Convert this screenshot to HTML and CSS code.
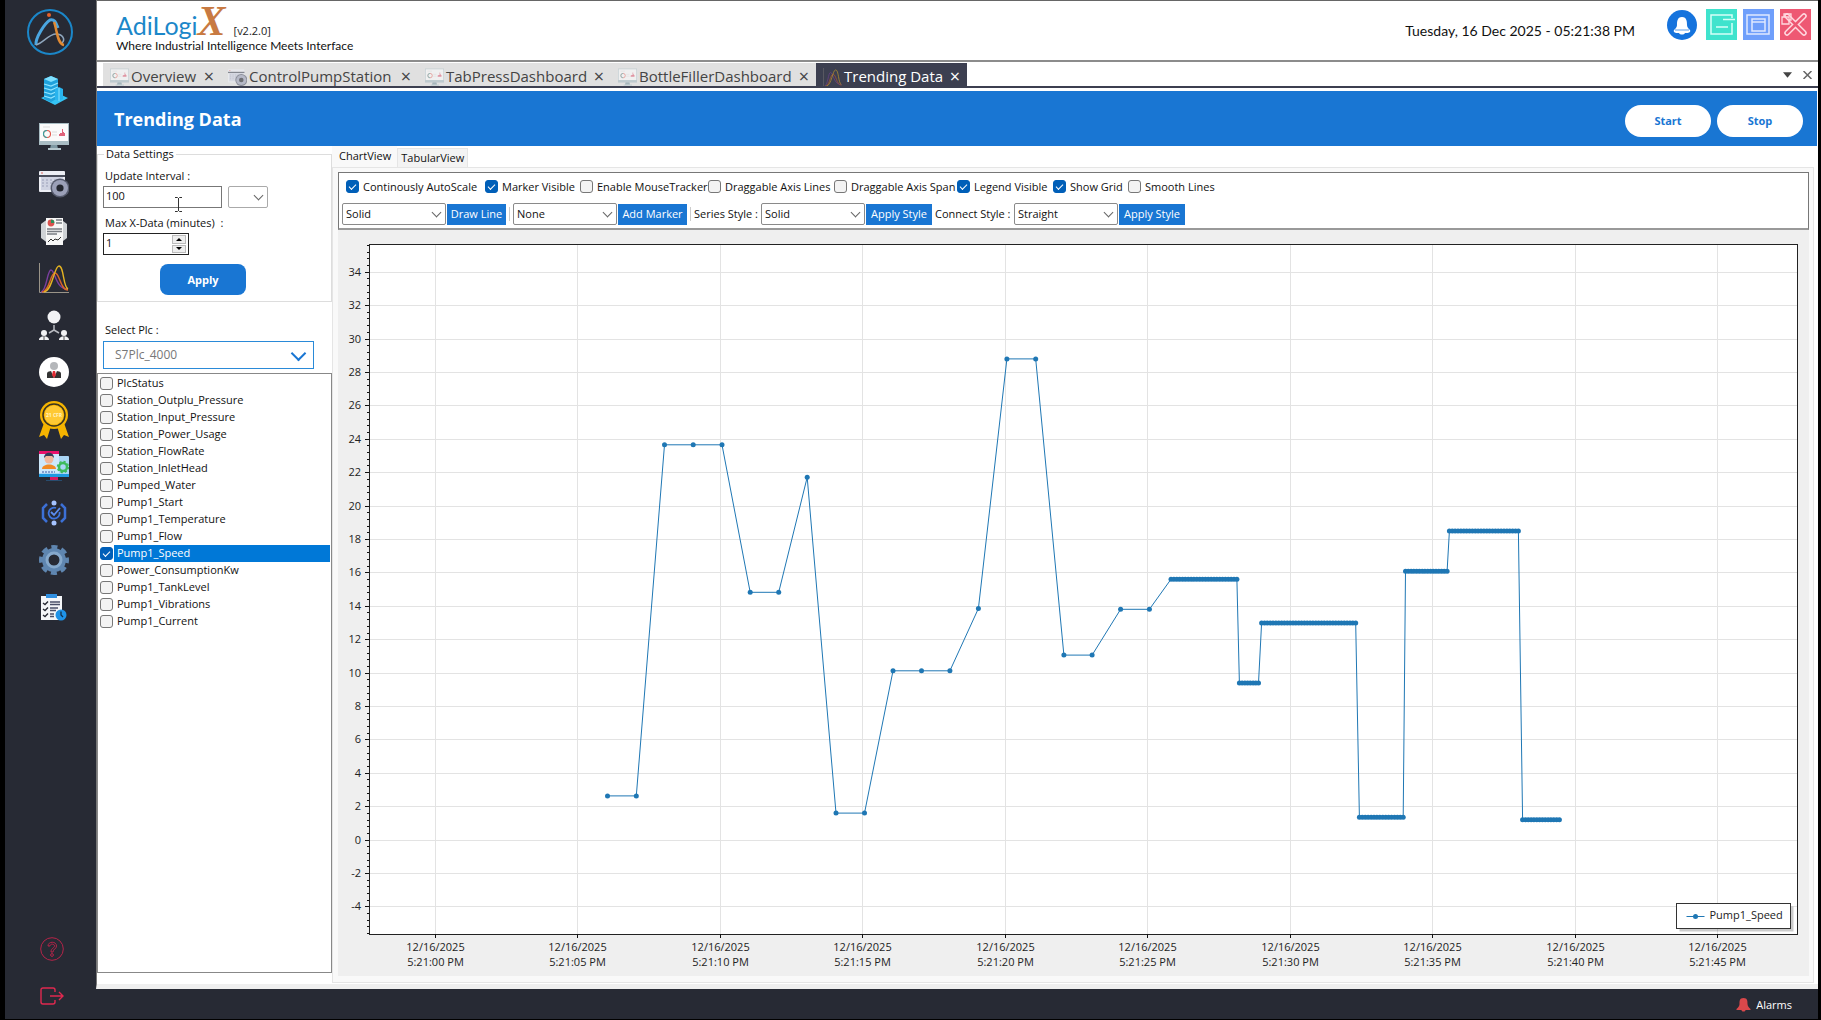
FILE: index.html
```html
<!DOCTYPE html>
<html lang="en">
<head>
    <meta charset="UTF-8">
    <meta name="viewport" content="width=device-width, initial-scale=1.0">
    <title>AdiLogiX - Trending Data</title>
    <link rel="stylesheet" href="styles.css">
</head>
<body>
    <!-- Shared icons -->
    <svg class="defs" width="0" height="0">
        <symbol id="monitor" viewBox="0 0 30 30">
            <path d="M12 22h6l1 5h-8z" fill="#7f99a3"/>
            <rect x="9" y="26" width="13" height="2" fill="#b5c7cd"/>
            <rect x="0" y="1" width="30" height="22" fill="#a9bdc4"/>
            <rect x="1" y="2" width="28" height="17" fill="#fbfbfb"/>
            <circle cx="8" cy="12" r="3.500" fill="none" stroke="#e2574c" stroke-width="1.100"/>
            <path d="M4.500 12a3.500 3.500 0 0 1 3.500-3.500M8 15.500a3.500 3.500 0 0 1-3.500-3.500" fill="none" stroke="#2fa8a8" stroke-width="1.100"/>
            <path d="M13 10h5M13 13h5M4 5h7" stroke="#ddd" stroke-width="1"/>
            <path d="M20 14v-2h1v-1h2V7h1v3h1v1h1v3z" fill="#e0637a"/>
        </symbol>
        <symbol id="window" viewBox="0 0 30 30">
            <rect x="0" y="2" width="26" height="21" rx="1" fill="#eceef4"/>
            <rect x="0" y="6" width="26" height="2" fill="#4a4e5c"/>
            <rect x="2" y="8" width="22" height="13" fill="#cfd3e2"/>
            <path d="M3 11h15M3 14h12M3 17h9" stroke="#9ba0b8" stroke-dasharray="2 2"/>
            <circle cx="3" cy="4" r="0.8" fill="#e2574c"/>
            <circle cx="21" cy="19" r="9.5" fill="#555a6c"/>
            <circle cx="21" cy="19" r="8" fill="#9ba0b8"/>
            <circle cx="21" cy="19" r="3.6" fill="#23262f"/>
        </symbol>
        <symbol id="curves" viewBox="0 0 30 30">
            <path d="M.5 0v29.5H30" fill="none" stroke="#9a9488"/>
            <path d="M2 29C8 28 8 7 12 7s5 20 17 19" fill="none" stroke="#7b3fa0" stroke-width="1.4"/>
            <path d="M3 29c8-1 8-19 13-19s5 17 13 17" fill="none" stroke="#d9622b" stroke-width="1.4"/>
            <path d="M5 29C14 27 15 3 20 3s4 21 9 23" fill="none" stroke="#e6b422" stroke-width="1.4"/>
        </symbol>
    </svg>

    <div class="app">
        <aside class="sidebar">
            <svg class="logo" viewBox="0 0 46 46">
                <circle cx="23" cy="23" r="22" fill="none" stroke="#1b87c9" stroke-width="2"/>
                <path d="M9 36c-1-7 9-22 14-25 5-1 6 3 8 8" fill="none" stroke="#4ba6e0" stroke-width="3"/>
                <path d="M9 36c7-2 13-11 20-11 6 0 10 5 6 9" fill="none" stroke="#8fa6bd" stroke-width="1.5"/>
                <path d="M27 13c3 7 3 22 10 23" fill="none" stroke="#e08a33" stroke-width="2.5"/>
                <circle cx="22" cy="6" r="2" fill="#e8622a"/>
            </svg>
            <nav class="menu">
                <a href="#" aria-label="Plant">
                    <svg viewBox="0 0 30 30">
                        <path d="M2 23l14-6 13 6-13 7z" fill="#35c4f5"/>
                        <path d="M5 4l7-3 7 3v19l-7 4-7-3z" fill="#1fa2dc"/>
                        <path d="M5 4l7-3 7 3-7 3z" fill="#7fe0ff"/>
                        <path d="M5 9l7 2 7-3M5 13l7 2 7-3M5 17l7 2 7-3M5 21l7 2 4-2" fill="none" stroke="#8fe4ff" stroke-width="1.3"/>
                        <path d="M16 14l4-2 4 2v10l-4 2-4-2z" fill="#29b4ee"/>
                        <path d="M20 13v13" stroke="#8fe4ff"/>
                    </svg>
                </a>
                <a href="#" aria-label="Dashboards"><svg><use href="#monitor"/></svg></a>
                <a href="#" aria-label="Control windows"><svg><use href="#window"/></svg></a>
                <a href="#" aria-label="Reports">
                    <svg viewBox="0 0 30 30">
                        <path d="M10 2h10l8 6v14l-8 6H10l-8-6V8z" fill="#cfd2d6"/>
                        <rect x="7" y="2" width="17" height="27" fill="#f7f7f7"/>
                        <circle cx="12" cy="7" r="3.4" fill="#d9534f"/>
                        <path d="M12 7V3.600a3.400 3.400 0 0 1 3.400 3.400z" fill="#2c8f5b"/>
                        <path d="M17 4h6M17 7h6M8 13h15M8 15.500h15M8 18h10" stroke="#7a7d84" stroke-width="1.300"/>
                        <path d="M9 26l3-3 2 2 2-2 3 1 3-3" fill="none" stroke="#333"/>
                    </svg>
                </a>
                <a href="#" aria-label="Trending"><svg><use href="#curves"/></svg></a>
                <a href="#" aria-label="Users">
                    <svg viewBox="0 0 30 30">
                        <circle cx="15" cy="7" r="6.500" fill="#f2f3f5"/>
                        <path d="M15 15v5l-5 3M15 20l5 3" fill="none" stroke="#b8bac0" stroke-width="1.500"/>
                        <circle cx="5" cy="23" r="3" fill="#f2f3f5"/>
                        <circle cx="25" cy="23" r="3" fill="#f2f3f5"/>
                        <path d="M0 30c0-5 10-5 10 0zM20 30c0-5 10-5 10 0z" fill="#f2f3f5"/>
                        <path d="M5 26v4M25 26v4" stroke="#555"/>
                    </svg>
                </a>
                <a href="#" aria-label="Account">
                    <svg viewBox="0 0 30 30">
                        <circle cx="15" cy="15" r="15" fill="#fff"/>
                        <circle cx="15" cy="9" r="4" fill="#b5b7ba"/>
                        <path d="M8 21v-4c0-3 3-3 7-3s7 0 7 3v4z" fill="#333"/>
                        <path d="M12 14h6l-3 7z" fill="#f3f3f3"/>
                        <path d="M14 14h2l1 4-2 3-2-3z" fill="#e02b34"/>
                    </svg>
                </a>
                <a href="#" aria-label="Quality">
                    <svg viewBox="0 0 30 38" class="tall">
                        <path d="M5 22L0 36l5-2 3 4 4-13zM25 22l5 14-5-2-3 4-4-13z" fill="#f5b400"/>
                        <circle cx="15" cy="14" r="14" fill="#f5b400"/>
                        <circle cx="15" cy="14" r="11" fill="none" stroke="#3a3420" stroke-width="1.500"/>
                        <circle cx="15" cy="14" r="9.500" fill="#ffc933"/>
                        <text x="15" y="16" text-anchor="middle" class="badge-text">21 CFR</text>
                    </svg>
                </a>
                <a href="#" aria-label="Operators">
                    <svg viewBox="0 0 30 30">
                        <rect x="11" y="25" width="8" height="4" fill="#d81b60"/>
                        <path d="M7 30h16" stroke="#2a6fa8"/>
                        <rect x="0" y="5" width="30" height="21" rx="1" fill="#a9d5f5"/>
                        <rect x="0" y="23" width="30" height="3" fill="#1f9ae0"/>
                        <rect x="0" y="0" width="20" height="22" fill="#cde8fb"/>
                        <rect x="0" y="0" width="20" height="3" fill="#e8126b"/>
                        <circle cx="10" cy="8" r="4.500" fill="#f2b79a"/>
                        <path d="M5 7c0-7 10-7 10 0l-2-2H7z" fill="#333a56"/>
                        <path d="M3 18c0-6 14-6 14 0z" fill="#f08a24"/>
                        <path d="M3 21h13" stroke="#3b5ba5" stroke-dasharray="2 1"/>
                        <circle cx="24" cy="16" r="4" fill="none" stroke="#3dbb5c" stroke-width="2.500"/>
                        <circle cx="24" cy="16" r="5.500" fill="none" stroke="#3dbb5c" stroke-width="1.500" stroke-dasharray="2.200 2.100"/>
                    </svg>
                </a>
                <a href="#" aria-label="Sync">
                    <svg viewBox="0 0 30 30">
                        <path d="M8 6L4 10v10l4 4M22 6l4 4v10l-4 4" fill="none" stroke="#3c70d6" stroke-width="2.500"/>
                        <circle cx="15" cy="5" r="2.500" fill="#a5c3ff"/>
                        <circle cx="15" cy="25" r="2.500" fill="#a5c3ff"/>
                        <path d="M17 10a5.500 5.500 0 1 0 3.500 4" fill="none" stroke="#3e74dd" stroke-width="1.800"/>
                        <path d="M12 14l3 3 6-7" fill="none" stroke="#5b8df0" stroke-width="1.800"/>
                    </svg>
                </a>
                <a href="#" aria-label="Settings">
                    <svg viewBox="0 0 30 30">
                        <circle cx="15" cy="15" r="12.500" fill="none" stroke="#5f86b0" stroke-width="5" stroke-dasharray="5.800 4.017" stroke-dashoffset="2.900"/>
                        <circle cx="15" cy="15" r="9" fill="none" stroke="#5f86b0" stroke-width="6"/>
                        <circle cx="15" cy="15" r="7" fill="none" stroke="#86a9cc" stroke-width="3"/>
                    </svg>
                </a>
                <a href="#" aria-label="Tasks">
                    <svg viewBox="0 0 30 30">
                        <rect x="2" y="4" width="21" height="24" fill="#f4f6f8"/>
                        <rect x="7" y="2" width="11" height="4" fill="#2f8fe0"/>
                        <path d="M4 11l2 1.500 3-3M4 17l2 1.500 3-3M4 23l2 1.500 3-3" fill="none" stroke="#272a34" stroke-width="1.400"/>
                        <path d="M11 10h10M11 12.500h10M11 16h8M11 18.500h6M11 22h4M11 24.500h4" stroke="#4a5068" stroke-width="1.400"/>
                        <circle cx="22" cy="23" r="5.500" fill="#1f93e8"/>
                        <path d="M22 19.500V23l2 2" fill="none" stroke="#12304c" stroke-width="1.300"/>
                    </svg>
                </a>
            </nav>
            <nav class="menu-bottom">
                <a href="#" aria-label="Help">
                    <svg viewBox="0 0 24 24" fill="none" stroke="#b52449">
                        <circle cx="12" cy="12" r="11.300"/>
                        <path d="M8 9c0-5 8.500-5 8.500 0 0 3-3.500 3-3.500 6h-2c0-4 3.500-4 3.500-6 0-2.500-4.500-2.500-4.500 0z"/>
                        <circle cx="12" cy="18" r="1.400"/>
                    </svg>
                </a>
                <a href="#" aria-label="Log out">
                    <svg viewBox="0 0 24 24" fill="none" stroke="#e0294f" stroke-width="1.400">
                        <path d="M15 8V6q0-2-2-2H3Q1 4 1 6v12q0 2 2 2h10q2 0 2-2v-2M10 12h13M19 8l4 4-4 4"/>
                    </svg>
                </a>
            </nav>
        </aside>

        <main class="main">
            <header class="header">
                <div class="brand">
                    <div class="brand-name">AdiLogi<span class="brand-x">X</span><span class="version">[v2.2.0]</span></div>
                    <div class="slogan">Where Industrial Intelligence Meets Interface</div>
                </div>
                <div class="header-right">
                    <span class="clock">Tuesday, 16 Dec 2025 - 05:21:38 PM</span>
                    <button class="bell" aria-label="Notifications">
                        <svg viewBox="0 0 30 30">
                            <circle cx="15" cy="15" r="15" fill="#1573dd"/>
                            <path d="M15 7c5 0 5 5 5 8 0 2 1 3 3 5 1 2-1 3-3 3h-2c-1 2-5 2-6 0h-2c-2 0-4-1-3-3 2-2 3-3 3-5 0-3 0-8 5-8z" fill="#fff"/>
                            <path d="M8 20h14" stroke="#1573dd" stroke-width="0.700"/>
                        </svg>
                    </button>
                    <button class="win minimize" aria-label="Minimize">
                        <svg viewBox="0 0 31 31"><path d="M26 14v11H5V6h21v3M17 10.500h12M10 18h12" fill="none" stroke="#d6fff8" stroke-width="1.500"/></svg>
                    </button>
                    <button class="win maximize" aria-label="Maximize">
                        <svg viewBox="0 0 31 31"><path d="M4 6h22v19H4zM9 10h13v12H9zM9 13h13" fill="none" stroke="#dfe9ff" stroke-width="1.500"/></svg>
                    </button>
                    <button class="win close" aria-label="Close">
                        <svg viewBox="0 0 31 31">
                            <path d="M7 7l17 17M24 7L7 24" stroke="#ffd9e0" stroke-width="5.500" stroke-linecap="round"/>
                            <path d="M7 7l17 17M24 7L7 24" stroke="#ee5873" stroke-width="2.500" stroke-linecap="round"/>
                            <path d="M2 8h7v7H2zM4 8V5h7v6H9" fill="none" stroke="#ffd9e0" stroke-width="1.300"/>
                        </svg>
                    </button>
                </div>
            </header>

            <div class="doc-tabs">
                <div class="doc-tab tab-overview"><svg><use href="#monitor"/></svg><a href="#">Overview</a><button aria-label="Close tab">×</button></div>
                <div class="doc-tab tab-pump"><svg><use href="#window"/></svg><a href="#">ControlPumpStation</a><button aria-label="Close tab">×</button></div>
                <div class="doc-tab tab-press"><svg><use href="#monitor"/></svg><a href="#">TabPressDashboard</a><button aria-label="Close tab">×</button></div>
                <div class="doc-tab tab-bottle"><svg><use href="#monitor"/></svg><a href="#">BottleFillerDashboard</a><button aria-label="Close tab">×</button></div>
                <div class="doc-tab tab-trend active"><svg><use href="#curves"/></svg><a href="#">Trending Data</a><button aria-label="Close tab">×</button></div>
                <div class="doc-tools">
                    <button aria-label="Tab list"><svg viewBox="0 0 10 6"><path d="M0 0h10L5 6z" fill="#444"/></svg></button>
                    <button aria-label="Close document"><svg viewBox="0 0 8 8"><path d="M0 0l8 8M8 0L0 8" stroke="#666" stroke-width="1.500"/></svg></button>
                </div>
            </div>

            <div class="banner">
                <h1>Trending Data</h1>
                <button>Start</button>
                <button>Stop</button>
            </div>

            <div class="content">
                <section class="left">
                    <fieldset class="settings">
                        <legend>Data Settings</legend>
                        <label for="interval">Update Interval :</label>
                        <div class="field-row">
                            <div class="interval-box">
                                <input type="text" id="interval" value="100">
                                <svg class="ibeam" viewBox="0 0 7 15"><path d="M0 .5h2.500l1 1 1-1H7M3.500 1v13M0 14.500h2.500l1-1 1 1H7" fill="none" stroke="#333"/></svg>
                            </div>
                            <span class="drop unit"><select aria-label="Interval unit"><option></option></select></span>
                        </div>
                        <label for="maxdata">Max X-Data (minutes) &nbsp;:</label>
                        <div class="spinner">
                            <input type="number" id="maxdata" value="1">
                            <div class="spin">
                                <button aria-label="Increase"><svg viewBox="0 0 6 3"><path d="M0 3h6L3 0z"/></svg></button>
                                <button aria-label="Decrease"><svg viewBox="0 0 6 3"><path d="M0 0h6L3 3z"/></svg></button>
                            </div>
                        </div>
                        <button class="apply">Apply</button>
                    </fieldset>
                    <div class="plc">
                        <label for="plc">Select Plc :</label>
                        <span class="drop plc-drop"><select id="plc"><option>S7Plc_4000</option></select></span>
                    </div>
                    <div class="tags">
                        <label><input type="checkbox"><span>PlcStatus</span></label>
                        <label><input type="checkbox"><span>Station_Outplu_Pressure</span></label>
                        <label><input type="checkbox"><span>Station_Input_Pressure</span></label>
                        <label><input type="checkbox"><span>Station_Power_Usage</span></label>
                        <label><input type="checkbox"><span>Station_FlowRate</span></label>
                        <label><input type="checkbox"><span>Station_InletHead</span></label>
                        <label><input type="checkbox"><span>Pumped_Water</span></label>
                        <label><input type="checkbox"><span>Pump1_Start</span></label>
                        <label><input type="checkbox"><span>Pump1_Temperature</span></label>
                        <label><input type="checkbox"><span>Pump1_Flow</span></label>
                        <label class="selected"><input type="checkbox" checked><span>Pump1_Speed</span></label>
                        <label><input type="checkbox"><span>Power_ConsumptionKw</span></label>
                        <label><input type="checkbox"><span>Pump1_TankLevel</span></label>
                        <label><input type="checkbox"><span>Pump1_Vibrations</span></label>
                        <label><input type="checkbox"><span>Pump1_Current</span></label>
                    </div>
                </section>

                <section class="right">
                    <div class="view-tabs">
                        <a href="#" class="current">ChartView</a>
                        <a href="#">TabularView</a>
                    </div>
                    <div class="view">
                        <div class="toolbar">
                            <div class="checks">
                                <label><input type="checkbox" checked>Continously AutoScale</label>
                                <label><input type="checkbox" checked>Marker Visible</label>
                                <label><input type="checkbox">Enable MouseTracker</label>
                                <label><input type="checkbox">Draggable Axis Lines</label>
                                <label><input type="checkbox">Draggable Axis Span</label>
                                <label><input type="checkbox" checked>Legend Visible</label>
                                <label><input type="checkbox" checked>Show Grid</label>
                                <label><input type="checkbox">Smooth Lines</label>
                            </div>
                            <div class="tools">
                                <span class="drop"><select aria-label="Line style"><option>Solid</option></select></span>
                                <button class="tool-line">Draw Line</button>
                                <i class="sep"></i>
                                <span class="drop"><select aria-label="Marker"><option>None</option></select></span>
                                <button class="tool-marker">Add Marker</button>
                                <i class="sep"></i>
                                <label for="series" class="series-label">Series Style :</label>
                                <span class="drop"><select id="series"><option>Solid</option></select></span>
                                <button class="tool-style">Apply Style</button>
                                <label for="connect" class="connect-label">Connect Style :</label>
                                <span class="drop"><select id="connect"><option>Straight</option></select></span>
                                <button class="tool-style">Apply Style</button>
                            </div>
                        </div>
                        <div class="chart">
                            <svg id="chart"></svg>
                        </div>
                    </div>
                </section>
            </div>
        </main>

        <footer class="footer">
            <svg viewBox="0 0 14 14"><path d="M7 0c4 0 4 3 4 6 0 2 1 3 3 5v1H9c0 2-4 2-4 0H0v-1c2-2 3-3 3-5 0-3 0-6 4-6z" fill="#d9484b"/></svg>
            <a href="#">Alarms</a>
        </footer>
    </div>

    <script src="chart.js"></script>
</body>
</html>
```

FILE: styles.css
```css
* {
    box-sizing: border-box;
}
body {
    margin: 0;
    background-color: #000;
    color: #111;
    font-family: 'Open Sans', 'Noto Sans', sans-serif;
    font-size: 11px;
    line-height: 16px;
}
button, input, select {
    font: inherit;
    color: inherit;
    margin: 0;
    padding: 0;
}
button {
    border: none;
    background: none;
    cursor: pointer;
}
a {
    color: inherit;
    text-decoration: none;
}
.defs {
    position: absolute;
}
.app {
    display: grid;
    grid-template-columns: 91px 1fr;
    grid-template-rows: 1fr 30px;
    height: 100vh;
    padding: 0 3px 1px 5px;
}

/* Sidebar */
.sidebar {
    grid-row: 1 / 3;
    background-color: #272a34;
    display: flex;
    flex-direction: column;
    padding: 9px 0 11px;
}
.logo {
    width: 46px;
    height: 46px;
    margin: 0 0 20px 22px;
}
.menu {
    display: flex;
    flex-direction: column;
    gap: 17px;
    padding-left: 34px;
}
.menu a, .menu svg {
    display: block;
    width: 30px;
    height: 30px;
}
.menu svg.tall {
    height: 38px;
    margin-top: -3px;
}
.badge-text {
    font-size: 5px;
    font-weight: bold;
    fill: #fff3c4;
}
.menu-bottom {
    margin-top: auto;
    padding-left: 35px;
    display: flex;
    flex-direction: column;
    gap: 23px;
}
.menu-bottom svg {
    display: block;
    width: 24px;
    height: 24px;
}

/* Main window */
.main {
    display: flex;
    flex-direction: column;
    min-width: 0;
    min-height: 0;
    background-color: #fff;
    border-left: 1px solid #777;
    border-bottom: 5px solid #efefef;
}
.header {
    height: 62px;
    border-top: 1px solid #666;
    border-bottom: 2px solid #8c8c8c;
    display: flex;
    justify-content: space-between;
    padding: 4px 7px 0 19px;
}
.brand-name {
    display: flex;
    align-items: baseline;
    height: 33px;
    line-height: 32px;
    font-family: Lato, sans-serif;
    font-size: 25px;
    color: #1b87c9;
}
.brand-x {
    font-family: 'Liberation Serif', serif;
    font-size: 42px;
    font-weight: bold;
    font-style: italic;
    color: #c87a42;
}
.version {
    margin-left: 8px;
    font-family: 'Open Sans', sans-serif;
    font-size: 11px;
    color: #222;
}
.slogan {
    font-family: Lato, sans-serif;
    font-size: 12px;
    line-height: 16px;
}
.header-right {
    display: flex;
    align-items: flex-start;
    padding-top: 4px;
}
.clock {
    font-family: Lato, sans-serif;
    font-size: 14px;
    line-height: 20px;
    margin: 12px 32px 0 0;
}
.bell {
    width: 30px;
    height: 30px;
    margin: 1px 9px 0 0;
}
.bell svg, .win svg {
    display: block;
}
.win {
    width: 31px;
    height: 31px;
    margin-left: 6px;
    background-color: #3fe3cd;
}
.bell + .win {
    margin-left: 0;
}
.maximize {
    background-color: #6f9ffb;
}
.close {
    background-color: #ee5873;
}

/* Document tabs */
.doc-tabs {
    display: flex;
    height: 25px;
    margin: 1px 0 3px;
    padding-left: 6px;
    border-bottom: 2px solid #3c3f50;
    font-size: 15px;
    line-height: 23px;
    color: #444;
}
.doc-tab {
    display: flex;
    align-items: center;
    overflow: hidden;
    background-color: #e0e0e0;
    padding: 3px 7px 0;
}
.doc-tab svg {
    flex: none;
    width: 19px;
    height: 19px;
    margin: 3px 2px 0 0;
    opacity: 0.6;
}
.doc-tab a {
    white-space: nowrap;
}
.doc-tab button {
    margin-left: auto;
    font-size: 18px;
}
.tab-overview {
    width: 118px;
}
.tab-pump {
    width: 197px;
}
.tab-press {
    width: 193px;
}
.tab-bottle {
    width: 205px;
}
.doc-tab.active {
    width: 151px;
    background-color: #3c3f50;
    color: #fff;
}
.doc-tools {
    display: flex;
    align-items: center;
    gap: 11px;
    margin-left: auto;
    padding-right: 6px;
}
.doc-tools button {
    line-height: 8px;
}
.doc-tools svg {
    display: block;
    width: 9px;
    height: 8px;
}

/* Blue title bar */
.banner {
    display: flex;
    align-items: center;
    gap: 6px;
    height: 55px;
    padding: 4px 14px 0 17px;
    margin-right: 1px;
    background-color: #1976d3;
}
.banner h1 {
    flex: 1;
    margin: 0;
    padding-bottom: 4px;
    font-size: 18px;
    color: #fff;
}
.banner button {
    width: 86px;
    height: 32px;
    border-radius: 16px;
    background-color: #fff;
    color: #1976d3;
    font-weight: bold;
}

.content {
    display: flex;
    flex: 1;
    min-height: 0;
}

/* Form controls */
.drop {
    position: relative;
    display: block;
    width: 104px;
    height: 22px;
}
.drop select {
    appearance: none;
    width: 100%;
    height: 100%;
    padding-left: 3px;
    border: 1px solid #8a8a8a;
    border-radius: 2px;
    background-color: #fff;
}
.drop::after {
    content: '';
    position: absolute;
    right: 6px;
    top: 6px;
    width: 6px;
    height: 6px;
    border-right: 1px solid #666;
    border-bottom: 1px solid #666;
    transform: rotate(45deg);
    pointer-events: none;
}
input[type="checkbox"] {
    appearance: none;
    flex: none;
    display: grid;
    place-items: center;
    width: 13px;
    height: 13px;
    border: 1px solid #777;
    border-radius: 3px;
    background-color: #f3f3f3;
}
input[type="checkbox"]:checked {
    border-color: #005fb8;
    background-color: #005fb8;
}
input[type="checkbox"]:checked::after {
    content: '';
    width: 6px;
    height: 3px;
    margin-bottom: 2px;
    border-left: 1px solid #fff;
    border-bottom: 1px solid #fff;
    transform: rotate(-45deg);
}

/* Left panel */
.left {
    display: flex;
    flex-direction: column;
    width: 235px;
    padding: 0 0 11px 0;
}
.settings {
    height: 156px;
    margin: 0;
    padding: 6px 0 0 5px;
    border: 1px solid #ddd;
}
.settings legend {
    padding: 0 2px;
    margin-left: 1px;
}
.settings > label {
    display: block;
    height: 18px;
    padding-left: 2px;
    line-height: 16px;
}
.field-row {
    display: flex;
    gap: 6px;
    margin-bottom: 7px;
}
.interval-box {
    position: relative;
}
.interval-box input {
    display: block;
    width: 119px;
    height: 22px;
    padding: 0 2px 4px;
    border: 1px solid #777;
}
.ibeam {
    position: absolute;
    left: 72px;
    top: 11px;
    width: 7px;
    height: 15px;
}
.unit {
    width: 40px;
}
.unit select {
    border-color: #aaa;
}
.spinner {
    display: flex;
    width: 86px;
    height: 22px;
    border: 1px solid #222;
    margin-bottom: 9px;
}
.spinner input {
    appearance: textfield;
    flex: 1;
    min-width: 0;
    padding: 0 2px 2px;
    border: none;
}
.spinner input::-webkit-inner-spin-button {
    display: none;
}
.spin {
    display: flex;
    flex-direction: column;
    gap: 1px;
    width: 14px;
    margin: 1px 2px;
}
.spin button {
    flex: 1;
    display: grid;
    place-items: center;
    border: 1px solid #bbb;
    background-color: #eee;
}
.spin svg {
    display: block;
    width: 6px;
    height: 3px;
}
.apply {
    display: block;
    width: 86px;
    height: 31px;
    margin-left: 57px;
    border-radius: 8px;
    background-color: #1976d3;
    color: #fff;
    font-weight: bold;
}
.plc {
    padding: 20px 0 4px 6px;
}
.plc label {
    display: block;
    height: 19px;
    padding-left: 2px;
}
.plc-drop {
    width: 211px;
    height: 28px;
}
.plc-drop select {
    padding-left: 11px;
    border: 1px solid #2a8ad8;
    border-radius: 0;
    font-size: 12px;
    color: #777;
}
.plc-drop::after {
    right: 10px;
    top: 7px;
    width: 9px;
    height: 9px;
    border-width: 2px;
    border-color: #1976d3;
}
.tags {
    flex: 1;
    border: 1px solid #888;
    padding: 1px;
}
.tags label {
    display: flex;
    align-items: center;
    gap: 1px;
    height: 17px;
    padding-left: 1px;
}
.tags span {
    flex: 1;
    height: 17px;
    padding-left: 3px;
    line-height: 16px;
}
.tags .selected span {
    background-color: #0078d7;
    color: #fff;
}

/* Right panel */
.right {
    display: flex;
    flex-direction: column;
    flex: 1;
    min-width: 0;
    padding: 0 4px 1px 0;
}
.view-tabs {
    display: flex;
    align-items: flex-end;
    height: 21px;
}
.view-tabs a {
    height: 19px;
    padding: 0 3px;
    line-height: 18px;
    border: 1px solid #e5e5e5;
    border-bottom: none;
    background-color: #f3f3f3;
}
.view-tabs a.current {
    height: 21px;
    padding: 1px 6px 0 7px;
    border: none;
    background-color: #f9f9f9;
}
.view {
    display: flex;
    flex-direction: column;
    flex: 1;
    min-height: 0;
    padding: 4px 4px 6px 5px;
    border: 1px solid #e5e5e5;
    background-color: #f9f9f9;
}
.toolbar {
    height: 58px;
    padding: 7px 3px 0;
    border: 1px solid #777;
    border-bottom: 2px solid #999;
    background-color: #fff;
}
.checks {
    display: grid;
    grid-template-columns: 139px 95px 128px 126px 123px 96px 75px auto;
    padding-left: 4px;
    height: 23px;
}
.checks label {
    display: flex;
    gap: 4px;
    line-height: 13px;
    white-space: nowrap;
}
.tools {
    display: flex;
    align-items: center;
    gap: 1px;
    white-space: nowrap;
}
.tools button {
    height: 21px;
    background-color: #1976d3;
    color: #fff;
}
.tool-line {
    width: 59px;
}
.tool-marker {
    width: 69px;
}
.tool-style {
    width: 66px;
}
.sep {
    width: 1px;
    height: 14px;
    margin: 0 2px;
    background-color: #ccc;
}
.series-label {
    width: 66px;
}
.connect-label {
    width: 80px;
    padding-left: 2px;
}
.chart {
    flex: 1;
    min-height: 0;
    background-color: #efefef;
}
.chart svg {
    display: block;
    width: 100%;
    height: 100%;
}
.chart text {
    font-size: 11px;
    fill: #222;
}
.grid {
    stroke: #e3e3e3;
}
.axis {
    stroke: #111;
    fill: none;
}
.plot {
    fill: #fff;
    stroke: #222;
}
.series {
    fill: none;
    stroke: #1f77b4;
}
.dot {
    fill: #1f77b4;
}
.legend-shadow {
    fill: #000;
    opacity: 0.2;
}
.legend-box {
    fill: #fff;
    stroke: #333;
}

/* Status bar */
.footer {
    display: flex;
    align-items: center;
    justify-content: flex-end;
    gap: 5px;
    padding: 1px 26px 0 0;
    background-color: #272a34;
    color: #fff;
}
.footer svg {
    width: 15px;
    height: 14px;
}
```

FILE: chart.js
```js
const svg = document.getElementById('chart');

// axis ranges, time in seconds after 5:21:00 PM
const range = { x0: -2.33, x1: 47.79, y0: -5.62, y1: 35.69 };
const margin = { left: 31, right: 12, top: 14, bottom: 42 };

// single readings: [seconds, value]
const slow = [
    [6.04, 2.65], [7.05, 2.65], [8.04, 23.67], [9.05, 23.67], [10.06, 23.67],
    [11.05, 14.84], [12.05, 14.84], [13.05, 21.72], [14.06, 1.62], [15.06, 1.62],
    [16.06, 10.14], [17.06, 10.14], [18.06, 10.14], [19.06, 13.87], [20.06, 28.81],
    [21.07, 28.81], [22.06, 11.08], [23.05, 11.08], [24.05, 13.82], [25.06, 13.82]
];

// runs of 100 ms readings: [from, to, value]
const fast = [
    [25.82, 28.13, 15.62], [28.22, 28.89, 9.41], [29, 32.3, 13],
    [32.43, 33.97, 1.37], [34.05, 35.51, 16.1], [35.59, 38.01, 18.5],
    [38.16, 39.45, 1.22]
];

function getPoints() {
    const points = slow.slice();
    fast.forEach(([from, to, value]) => {
        const count = Math.round((to - from) / 0.1);
        for (let i = 0; i <= count; i++) {
            points.push([from + (to - from) * i / count, value]);
        }
    });
    return points;
}

function drawChart() {
    const { width, height } = svg.getBoundingClientRect();
    const left = margin.left;
    const right = width - margin.right;
    const top = margin.top;
    const bottom = height - margin.bottom;
    const px = t => left + (t - range.x0) / (range.x1 - range.x0) * (right - left);
    const py = v => bottom - (v - range.y0) / (range.y1 - range.y0) * (bottom - top);
    const snap = n => Math.floor(n) + 0.5;
    let out = `<rect class="plot" x="${snap(left)}" y="${snap(top)}" width="${Math.round(right - left)}" height="${Math.round(bottom - top)}"/>`;

    for (let t = 0; t <= 45; t += 5) {
        const x = snap(px(t));
        const time = '5:21:' + String(t).padStart(2, '0') + ' PM';
        out += `<path class="grid" d="M${x} ${top + 1}V${bottom}"/>`;
        out += `<path class="axis" d="M${x} ${bottom}v4"/>`;
        out += `<text x="${x}" y="${bottom + 17}" text-anchor="middle">12/16/2025</text>`;
        out += `<text x="${x}" y="${bottom + 32}" text-anchor="middle">${time}</text>`;
    }
    for (let v = -4; v <= 34; v += 2) {
        const y = snap(py(v));
        out += `<path class="grid" d="M${left + 1} ${y}H${right}"/>`;
        out += `<path class="axis" d="M${left - 4} ${y}h4"/>`;
        out += `<text x="${left - 8}" y="${y + 3}" text-anchor="end">${v}</text>`;
    }
    for (let v = -5.6; v < 35.6; v += 0.4) {
        out += `<path class="axis" d="M${left - 2} ${snap(py(v))}h2"/>`;
    }

    const points = getPoints().map(([t, v]) => [px(t).toFixed(1), py(v).toFixed(1)]);
    out += `<polyline class="series" points="${points.map(p => p.join(',')).join(' ')}"/>`;
    points.forEach(([x, y]) => {
        out += `<circle class="dot" cx="${x}" cy="${y}" r="2.5"/>`;
    });

    // legend
    const lx = snap(right - 121);
    const ly = snap(bottom - 31);
    out += `<rect class="legend-shadow" x="${lx + 3}" y="${ly + 3}" width="114" height="25"/>`;
    out += `<rect class="legend-box" x="${lx}" y="${ly}" width="114" height="25"/>`;
    out += `<path class="series" d="M${lx + 10} ${ly + 13}h18"/>`;
    out += `<circle class="dot" cx="${lx + 19}" cy="${ly + 13}" r="2.5"/>`;
    out += `<text x="${lx + 33}" y="${ly + 15}">Pump1_Speed</text>`;

    svg.innerHTML = out;
}

drawChart();
window.addEventListener('resize', drawChart);
```
